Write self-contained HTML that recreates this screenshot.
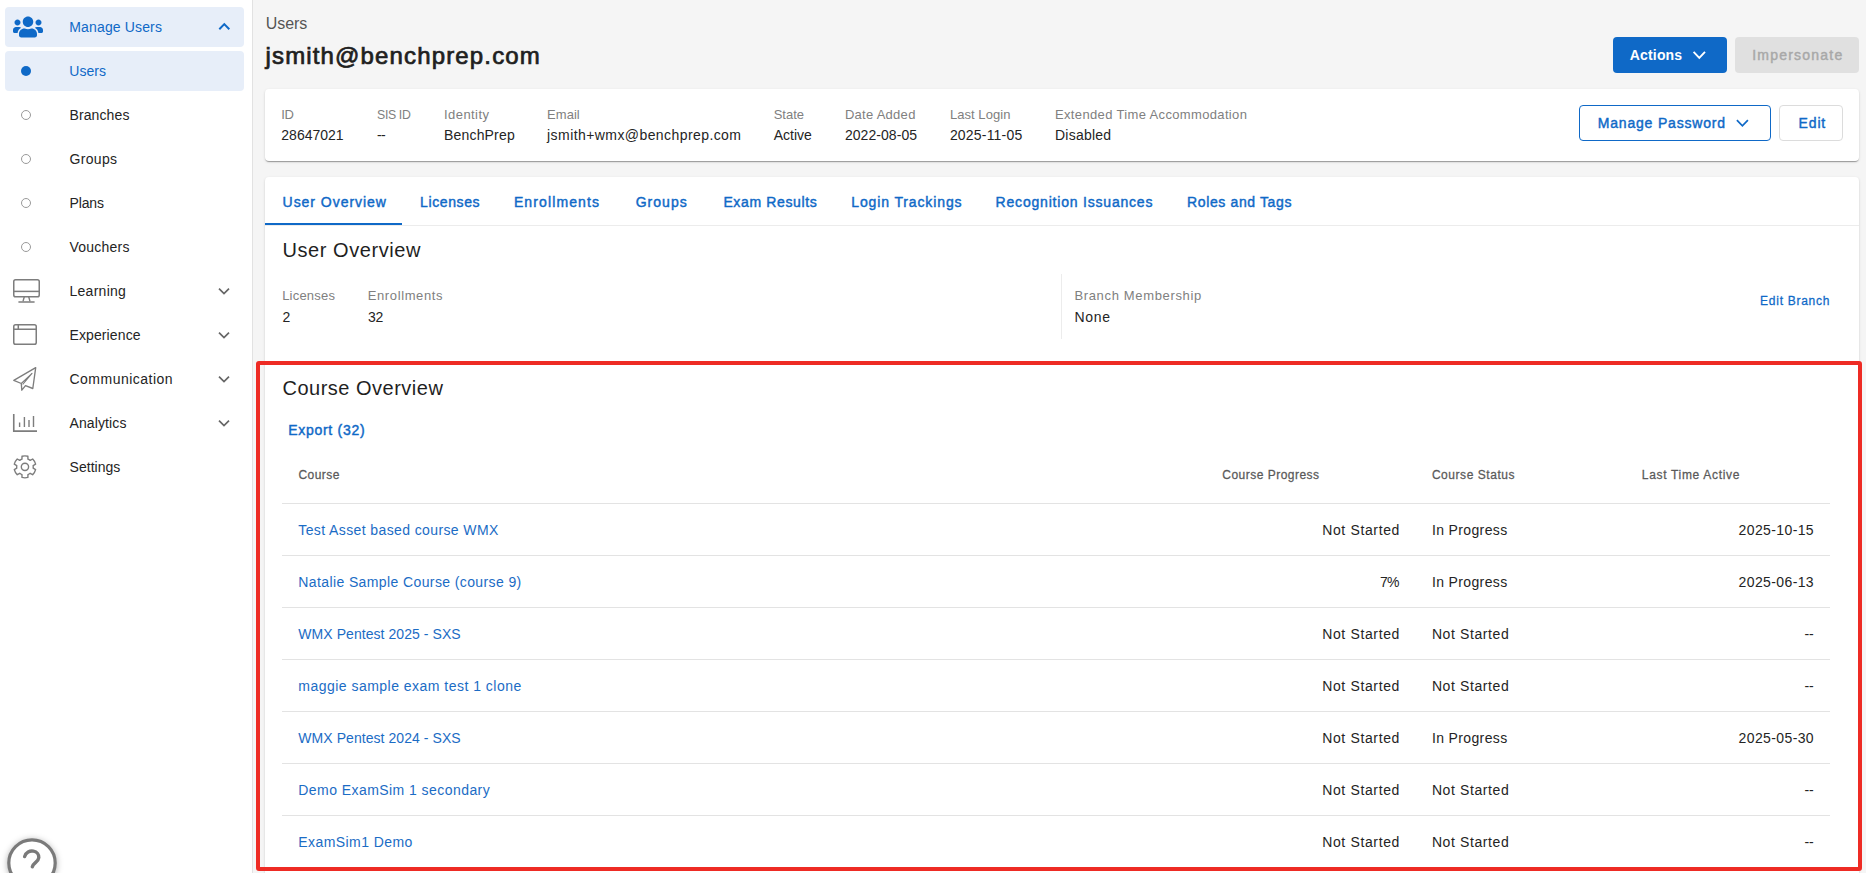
<!DOCTYPE html>
<html lang="en"><head><meta charset="utf-8"><title>Users - jsmith@benchprep.com</title>
<style>
*{box-sizing:border-box}
html,body{margin:0;padding:0}
body{width:1866px;height:873px;overflow:hidden;background:#f5f5f5;font-family:"Liberation Sans", sans-serif;position:relative;color:#242424}
.t{position:absolute;white-space:pre;line-height:1;text-decoration:none;margin:0;padding:0;font-style:normal}
.box{position:absolute}
svg{position:absolute;overflow:visible}
.sidebar-bg{left:0;top:0;width:252px;height:873px;background:#fff;border-right:1px solid #e2e2e2;width:253px}
.hl{left:5px;width:239px;height:40px;border-radius:4px;background:#e7eef9}
.dot{width:10px;height:10px;border-radius:50%;left:21px}
.dot.on{background:#0f69c7}
.dot.off{border:1px solid #9a9a9a;background:#fff}
.card{background:#fff;border-radius:4px}
.btn{border-radius:4px}
.line{background:#e3e3e3;height:1px}

table,thead,tbody,tr,th,td,dl,dt,dd,h1,h2{display:block;margin:0;padding:0;border:0;font-weight:400}
</style></head>
<body>
<aside>
<div class="box sidebar-bg"></div>
<nav>
<div class="box hl" style="top:7px"></div>
<div class="box hl" style="top:51px"></div>
<a>
<svg style="left:13.2px;top:14.7px" width="30" height="24" viewBox="0 0 640 512"><path fill="#0f69c7" d="M96 224c35.3 0 64-28.700 64-64s-28.700-64-64-64-64 28.700-64 64 28.700 64 64 64zm448 0c35.300 0 64-28.700 64-64s-28.700-64-64-64-64 28.700-64 64 28.700 64 64 64zm32 32h-64c-17.600 0-33.500 7.100-45.100 18.600 40.300 22.100 68.900 62 75.100 109.400h66c17.700 0 32-14.300 32-32v-32c0-35.300-28.700-64-64-64zm-256 0c61.900 0 112-50.100 112-112S381.900 32 320 32 208 82.100 208 144s50.100 112 112 112zm76.800 32h-8.300c-20.800 10-43.900 16-68.500 16s-47.600-6-68.500-16h-8.300C179.600 288 128 339.600 128 403.200V432c0 26.500 21.500 48 48 48h288c26.500 0 48-21.500 48-48v-28.800c0-63.600-51.600-115.200-115.200-115.200zm-223.700-13.400C161.500 263.100 145.600 256 128 256H64c-35.300 0-64 28.700-64 64v32c0 17.700 14.300 32 32 32h65.900c6.300-47.400 34.900-87.300 75.200-109.400z"/></svg>
<span class="t" style="top:20.15px;font-size:14px;font-weight:400;color:#0f69c7;letter-spacing:0.14px;left:69.3px;">Manage Users</span>
<svg style="left:217px;top:21px" width="14" height="12" viewBox="0 0 14 12"><path d="M2.3 8.2 L7.3 3.1 L12.3 8.2" fill="none" stroke="#0f69c7" stroke-width="2"/></svg>
</a>
<a><div class="box dot on" style="top:66px"></div><span class="t" style="top:64.15px;font-size:14px;font-weight:400;color:#0f69c7;letter-spacing:0.01px;left:69.3px;">Users</span></a>
<a><div class="box dot off" style="top:110px"></div><span class="t" style="top:108.15px;font-size:14px;font-weight:400;color:#242424;letter-spacing:0.11px;left:69.5px;">Branches</span></a>
<a><div class="box dot off" style="top:154px"></div><span class="t" style="top:152.15px;font-size:14px;font-weight:400;color:#242424;letter-spacing:0.32px;left:69.5px;">Groups</span></a>
<a><div class="box dot off" style="top:198px"></div><span class="t" style="top:196.15px;font-size:14px;font-weight:400;color:#242424;letter-spacing:-0.16px;left:69.5px;">Plans</span></a>
<a><div class="box dot off" style="top:242px"></div><span class="t" style="top:240.15px;font-size:14px;font-weight:400;color:#242424;letter-spacing:0.22px;left:69.5px;">Vouchers</span></a>
<a><svg style="left:13px;top:279px" width="27" height="24" viewBox="0 0 27 24" fill="none" stroke="#7d7d7d" stroke-width="1.5"><rect x="0.75" y="0.75" width="25.5" height="17" rx="1.8"/><path d="M0.75 12.4H26.25"/><path d="M11.3 17.8 L10 22.4 M15.7 17.8 L17 22.4" stroke-width="1.4"/><path d="M6 23H21" stroke-width="1.6" stroke-linecap="round"/></svg><span class="t" style="top:284.15px;font-size:14px;font-weight:400;color:#242424;letter-spacing:0.27px;left:69.5px;">Learning</span><svg style="left:217px;top:285px" width="14" height="12" viewBox="0 0 14 12"><path d="M2 3.6 L7 8.6 L12 3.6" fill="none" stroke="#666" stroke-width="1.7"/></svg></a>
<a><svg style="left:13px;top:324px" width="24" height="21" viewBox="0 0 24 21" fill="none" stroke="#7d7d7d" stroke-width="1.5"><rect x="0.75" y="0.75" width="22.5" height="19.5" rx="1.8"/><path d="M0.75 5.2H23.25 M5.3 0.75V5.2"/></svg><span class="t" style="top:328.15px;font-size:14px;font-weight:400;color:#242424;letter-spacing:0.11px;left:69.5px;">Experience</span><svg style="left:217px;top:329px" width="14" height="12" viewBox="0 0 14 12"><path d="M2 3.6 L7 8.6 L12 3.6" fill="none" stroke="#666" stroke-width="1.7"/></svg></a>
<a><svg style="left:0;top:0" width="60" height="400" viewBox="0 0 60 400" fill="none" stroke="#7d7d7d" stroke-width="1.35" stroke-linejoin="round"><path d="M35.7 367.7 L13.8 380.4 L21.3 383.5 L21.8 390.2 L25.5 385.6 L32.8 388.5 Z"/><path d="M21.3 383.5 L32 373.300 L22.700 384.500" stroke-width="1.1"/></svg><span class="t" style="top:372.15px;font-size:14px;font-weight:400;color:#242424;letter-spacing:0.48px;left:69.5px;">Communication</span><svg style="left:217px;top:373px" width="14" height="12" viewBox="0 0 14 12"><path d="M2 3.6 L7 8.6 L12 3.6" fill="none" stroke="#666" stroke-width="1.7"/></svg></a>
<a><svg style="left:13px;top:414px" width="24" height="18" viewBox="0 0 24 18" fill="none" stroke="#7d7d7d" stroke-width="1.5"><path d="M0.75 0V17.1H24" stroke-width="1.6"/><path d="M6.6 8.6V13 M11.4 3V13 M16 6V13 M20.5 1.9V13" stroke-width="1.4"/></svg><span class="t" style="top:416.15px;font-size:14px;font-weight:400;color:#242424;letter-spacing:0.11px;left:69.5px;">Analytics</span><svg style="left:217px;top:417px" width="14" height="12" viewBox="0 0 14 12"><path d="M2 3.6 L7 8.6 L12 3.6" fill="none" stroke="#666" stroke-width="1.7"/></svg></a>
<a><svg style="left:0;top:0" width="60" height="500" viewBox="0 0 60 500" fill="none" stroke="#7d7d7d" stroke-width="1.4" stroke-linejoin="round"><path d="M21.95 459.11 L22.02 456.25 A11.00 11.00 0 0 1 27.88 456.25 L27.95 459.11 A8.30 8.30 0 0 1 30.15 460.38 L32.66 459.01 A11.00 11.00 0 0 1 35.60 464.09 L33.15 465.58 A8.30 8.30 0 0 1 33.15 468.12 L35.60 469.61 A11.00 11.00 0 0 1 32.66 474.69 L30.15 473.32 A8.30 8.30 0 0 1 27.95 474.59 L27.88 477.45 A11.00 11.00 0 0 1 22.02 477.45 L21.95 474.59 A8.30 8.30 0 0 1 19.75 473.32 L17.24 474.69 A11.00 11.00 0 0 1 14.30 469.61 L16.75 468.12 A8.30 8.30 0 0 1 16.75 465.58 L14.30 464.09 A11.00 11.00 0 0 1 17.24 459.01 L19.75 460.38 A8.30 8.30 0 0 1 21.95 459.11Z"/><circle cx="24.95" cy="466.85" r="3.65"/></svg><span class="t" style="top:460.15px;font-size:14px;font-weight:400;color:#242424;letter-spacing:0.04px;left:69.5px;">Settings</span></a>
</nav>
<svg style="left:4px;top:835px" width="56" height="56" viewBox="0 0 56 56"><circle cx="28" cy="28" r="23.2" fill="#fff" stroke="#7a7a7a" stroke-width="3.2" style="filter:drop-shadow(0 1px 3px rgba(0,0,0,.3))"/><path d="M20.6 21.6c1.200-4.300 5.200-6.200 8.800-5.500 3.600 0.700 5.600 3.600 5.400 6.500-0.300 4.400-5.800 5.400-6.500 9.300" fill="none" stroke="#7a7a7a" stroke-width="3.4" stroke-linecap="round"/></svg>
</aside>
<main>
<header>
<span class="t" style="top:15.86px;font-size:16px;font-weight:400;color:#555;letter-spacing:-0.1px;left:265.8px;">Users</span>
<h1 class="t" style="top:43.58px;font-size:24px;font-weight:400;-webkit-text-stroke:0.74px #1f1f1f;color:#1f1f1f;letter-spacing:1.15px;left:265.5px;">jsmith@benchprep.com</h1>
<div class="box btn" style="left:1613px;top:37px;width:114px;height:36px;background:#0f69c7"></div>
<span class="t" style="top:48.35px;font-size:14px;font-weight:700;color:#fff;letter-spacing:0.16px;left:1629.8px;">Actions</span>
<svg style="left:1692px;top:49px" width="15" height="12" viewBox="0 0 15 12"><path d="M1.6 2.900 L7.300 8.800 L13 2.900" fill="none" stroke="#fff" stroke-width="1.900"/></svg>
<div class="box btn" style="left:1735px;top:37px;width:124px;height:36px;background:#e0e0e0"></div>
<span class="t" style="top:48.35px;font-size:14px;font-weight:400;-webkit-text-stroke:0.43px #a8a8a8;color:#a8a8a8;letter-spacing:1.22px;left:1752.2px;">Impersonate</span>
</header>
<section>
<div class="box card" style="left:265px;top:89px;width:1594px;height:71.500px;box-shadow:0 2px 1px -1px rgba(0,0,0,.2),0 1px 1px 0 rgba(0,0,0,.14),0 1px 3px 0 rgba(0,0,0,.12)"></div>
<dl>
<dt class="t" style="top:108.0px;font-size:13px;font-weight:400;color:#808080;letter-spacing:-0.4px;left:281.3px;">ID</dt><dd class="t" style="top:128.15px;font-size:14px;font-weight:400;color:#242424;letter-spacing:0.01px;left:281.3px;">28647021</dd>
<dt class="t" style="top:108.59px;font-size:12.3px;font-weight:400;color:#808080;letter-spacing:-0.37px;left:377.1px;">SIS ID</dt><dd class="t" style="top:128.15px;font-size:14px;font-weight:400;color:#242424;letter-spacing:-0.73px;left:377.1px;">--</dd>
<dt class="t" style="top:108.0px;font-size:13px;font-weight:400;color:#808080;letter-spacing:0.44px;left:444px;">Identity</dt><dd class="t" style="top:128.15px;font-size:14px;font-weight:400;color:#242424;letter-spacing:0.18px;left:444px;">BenchPrep</dd>
<dt class="t" style="top:108.0px;font-size:13px;font-weight:400;color:#808080;letter-spacing:0.02px;left:547.1px;">Email</dt><dd class="t" style="top:128.15px;font-size:14px;font-weight:400;color:#242424;letter-spacing:0.42px;left:547.1px;">jsmith+wmx@benchprep.com</dd>
<dt class="t" style="top:108.0px;font-size:13px;font-weight:400;color:#808080;letter-spacing:-0.01px;left:773.7px;">State</dt><dd class="t" style="top:128.15px;font-size:14px;font-weight:400;color:#242424;letter-spacing:0.01px;left:773.7px;">Active</dd>
<dt class="t" style="top:108.0px;font-size:13px;font-weight:400;color:#808080;letter-spacing:0.28px;left:844.9px;">Date Added</dt><dd class="t" style="top:128.15px;font-size:14px;font-weight:400;color:#242424;letter-spacing:0.06px;left:844.9px;">2022-08-05</dd>
<dt class="t" style="top:108.0px;font-size:13px;font-weight:400;color:#808080;letter-spacing:0.06px;left:949.9px;">Last Login</dt><dd class="t" style="top:128.15px;font-size:14px;font-weight:400;color:#242424;letter-spacing:0.19px;left:949.9px;">2025-11-05</dd>
<dt class="t" style="top:108.0px;font-size:13px;font-weight:400;color:#808080;letter-spacing:0.35px;left:1055px;">Extended Time Accommodation</dt><dd class="t" style="top:128.15px;font-size:14px;font-weight:400;color:#242424;letter-spacing:0.23px;left:1055px;">Disabled</dd>
</dl>
<div class="box btn" style="left:1579px;top:105px;width:192px;height:36px;border:1px solid #0f69c7;background:#fff"></div>
<span class="t" style="top:116.35px;font-size:14px;font-weight:400;-webkit-text-stroke:0.43px #0f69c7;color:#0f69c7;letter-spacing:0.82px;left:1597.7px;">Manage Password</span>
<svg style="left:1735px;top:117px" width="15" height="12" viewBox="0 0 15 12"><path d="M1.9 3.100 L7.400 8.800 L12.9 3.100" fill="none" stroke="#0f69c7" stroke-width="1.700"/></svg>
<div class="box btn" style="left:1779px;top:105px;width:64px;height:36px;border:1px solid #dcdcdc;background:#fff"></div>
<span class="t" style="top:116.35px;font-size:14px;font-weight:400;-webkit-text-stroke:0.43px #0f69c7;color:#0f69c7;letter-spacing:0.83px;left:1798.6px;">Edit</span>
</section>
<section>
<div class="box card" style="left:265px;top:177px;width:1594px;height:720px;border-radius:4px 4px 0 0;box-shadow:0 2px 1px -1px rgba(0,0,0,.2),0 1px 1px 0 rgba(0,0,0,.14),0 1px 3px 0 rgba(0,0,0,.12)"></div>
<div class="box line" style="left:265px;top:225px;width:1594px;background:#ececec"></div>
<div class="box" style="left:265px;top:223px;width:137px;height:2px;background:#0f69c7"></div>
<nav>
<a class="t" style="top:195.15px;font-size:14px;font-weight:400;-webkit-text-stroke:0.43px #0f69c7;color:#0f69c7;letter-spacing:0.96px;left:282.6px;">User Overview</a>
<a class="t" style="top:195.15px;font-size:14px;font-weight:400;-webkit-text-stroke:0.43px #0f69c7;color:#0f69c7;letter-spacing:0.62px;left:420px;">Licenses</a>
<a class="t" style="top:195.15px;font-size:14px;font-weight:400;-webkit-text-stroke:0.43px #0f69c7;color:#0f69c7;letter-spacing:1.12px;left:513.9px;">Enrollments</a>
<a class="t" style="top:195.15px;font-size:14px;font-weight:400;-webkit-text-stroke:0.43px #0f69c7;color:#0f69c7;letter-spacing:1.02px;left:635.7px;">Groups</a>
<a class="t" style="top:195.15px;font-size:14px;font-weight:400;-webkit-text-stroke:0.43px #0f69c7;color:#0f69c7;letter-spacing:0.64px;left:723.4px;">Exam Results</a>
<a class="t" style="top:195.15px;font-size:14px;font-weight:400;-webkit-text-stroke:0.43px #0f69c7;color:#0f69c7;letter-spacing:0.87px;left:851.3px;">Login Trackings</a>
<a class="t" style="top:195.15px;font-size:14px;font-weight:400;-webkit-text-stroke:0.43px #0f69c7;color:#0f69c7;letter-spacing:0.8px;left:995.6px;">Recognition Issuances</a>
<a class="t" style="top:195.15px;font-size:14px;font-weight:400;-webkit-text-stroke:0.43px #0f69c7;color:#0f69c7;letter-spacing:0.63px;left:1187px;">Roles and Tags</a>
</nav>
<h2 class="t" style="top:240.07px;font-size:20px;font-weight:400;color:#1f1f1f;letter-spacing:0.57px;left:282.4px;">User Overview</h2>
<span class="t" style="top:289.0px;font-size:13px;font-weight:400;color:#808080;letter-spacing:0.2px;left:282.2px;">Licenses</span><span class="t" style="top:310.15px;font-size:14px;font-weight:400;color:#242424;letter-spacing:-0.7px;left:282.6px;">2</span>
<span class="t" style="top:289.0px;font-size:13px;font-weight:400;color:#808080;letter-spacing:0.62px;left:367.7px;">Enrollments</span><span class="t" style="top:310.15px;font-size:14px;font-weight:400;color:#242424;letter-spacing:-0.18px;left:367.9px;">32</span>
<div class="box" style="left:1061px;top:274px;width:1px;height:65px;background:#ececec"></div>
<span class="t" style="top:289.0px;font-size:13px;font-weight:400;color:#808080;letter-spacing:0.66px;left:1074.4px;">Branch Membership</span><span class="t" style="top:310.15px;font-size:14px;font-weight:400;color:#242424;letter-spacing:0.64px;left:1074.6px;">None</span>
<a class="t" style="top:294.84px;font-size:12px;font-weight:400;-webkit-text-stroke:0.26px #0f69c7;color:#0f69c7;letter-spacing:0.73px;left:1760.1px;">Edit Branch</a>
<h2 class="t" style="top:378.37px;font-size:20px;font-weight:400;color:#1f1f1f;letter-spacing:0.5px;left:282.5px;">Course Overview</h2>
<a class="t" style="top:423.15px;font-size:14px;font-weight:400;-webkit-text-stroke:0.43px #0f69c7;color:#0f69c7;letter-spacing:0.72px;left:288.2px;">Export (32)</a>
<table><thead><tr>
<th><span class="t" style="top:468.84px;font-size:12px;font-weight:400;-webkit-text-stroke:0.26px #5a5a5a;color:#5a5a5a;letter-spacing:0.46px;left:298.4px;">Course</span></th>
<th><span class="t" style="top:468.84px;font-size:12px;font-weight:400;-webkit-text-stroke:0.26px #5a5a5a;color:#5a5a5a;letter-spacing:0.48px;left:1222.3px;">Course Progress</span></th>
<th><span class="t" style="top:468.84px;font-size:12px;font-weight:400;-webkit-text-stroke:0.26px #5a5a5a;color:#5a5a5a;letter-spacing:0.55px;left:1431.9px;">Course Status</span></th>
<th><span class="t" style="top:468.84px;font-size:12px;font-weight:400;-webkit-text-stroke:0.26px #5a5a5a;color:#5a5a5a;letter-spacing:0.68px;left:1641.8px;">Last Time Active</span></th>
</tr></thead><tbody>
<tr>
<td><div class="box line" style="left:282px;top:503px;width:1548px"></div><a class="t" style="top:523.15px;font-size:14px;font-weight:400;color:#1b6cc5;letter-spacing:0.39px;left:298.3px;">Test Asset based course WMX</a></td>
<td><span class="t" style="top:523.15px;font-size:14px;font-weight:400;color:#242424;letter-spacing:0.64px;left:1322.2px;">Not Started</span></td>
<td><span class="t" style="top:523.15px;font-size:14px;font-weight:400;color:#242424;letter-spacing:0.37px;left:1431.9px;">In Progress</span></td>
<td><span class="t" style="top:523.15px;font-size:14px;font-weight:400;color:#242424;letter-spacing:0.38px;left:1738.6px;">2025-10-15</span></td>
</tr>
<tr>
<td><div class="box line" style="left:282px;top:555px;width:1548px"></div><a class="t" style="top:575.15px;font-size:14px;font-weight:400;color:#1b6cc5;letter-spacing:0.39px;left:298.3px;">Natalie Sample Course (course 9)</a></td>
<td><span class="t" style="top:575.15px;font-size:14px;font-weight:400;color:#242424;letter-spacing:-0.83px;left:1380px;">7%</span></td>
<td><span class="t" style="top:575.15px;font-size:14px;font-weight:400;color:#242424;letter-spacing:0.37px;left:1431.9px;">In Progress</span></td>
<td><span class="t" style="top:575.15px;font-size:14px;font-weight:400;color:#242424;letter-spacing:0.38px;left:1738.6px;">2025-06-13</span></td>
</tr>
<tr>
<td><div class="box line" style="left:282px;top:607px;width:1548px"></div><a class="t" style="top:627.15px;font-size:14px;font-weight:400;color:#1b6cc5;letter-spacing:0.06px;left:298.3px;">WMX Pentest 2025 - SXS</a></td>
<td><span class="t" style="top:627.15px;font-size:14px;font-weight:400;color:#242424;letter-spacing:0.64px;left:1322.2px;">Not Started</span></td>
<td><span class="t" style="top:627.15px;font-size:14px;font-weight:400;color:#242424;letter-spacing:0.6px;left:1431.9px;">Not Started</span></td>
<td><span class="t" style="top:627.15px;font-size:14px;font-weight:400;color:#242424;letter-spacing:-0.23px;left:1804.5px;">--</span></td>
</tr>
<tr>
<td><div class="box line" style="left:282px;top:659px;width:1548px"></div><a class="t" style="top:679.15px;font-size:14px;font-weight:400;color:#1b6cc5;letter-spacing:0.48px;left:298.3px;">maggie sample exam test 1 clone</a></td>
<td><span class="t" style="top:679.15px;font-size:14px;font-weight:400;color:#242424;letter-spacing:0.64px;left:1322.2px;">Not Started</span></td>
<td><span class="t" style="top:679.15px;font-size:14px;font-weight:400;color:#242424;letter-spacing:0.6px;left:1431.9px;">Not Started</span></td>
<td><span class="t" style="top:679.15px;font-size:14px;font-weight:400;color:#242424;letter-spacing:-0.23px;left:1804.5px;">--</span></td>
</tr>
<tr>
<td><div class="box line" style="left:282px;top:711px;width:1548px"></div><a class="t" style="top:731.15px;font-size:14px;font-weight:400;color:#1b6cc5;letter-spacing:0.06px;left:298.3px;">WMX Pentest 2024 - SXS</a></td>
<td><span class="t" style="top:731.15px;font-size:14px;font-weight:400;color:#242424;letter-spacing:0.64px;left:1322.2px;">Not Started</span></td>
<td><span class="t" style="top:731.15px;font-size:14px;font-weight:400;color:#242424;letter-spacing:0.37px;left:1431.9px;">In Progress</span></td>
<td><span class="t" style="top:731.15px;font-size:14px;font-weight:400;color:#242424;letter-spacing:0.38px;left:1738.6px;">2025-05-30</span></td>
</tr>
<tr>
<td><div class="box line" style="left:282px;top:763px;width:1548px"></div><a class="t" style="top:783.15px;font-size:14px;font-weight:400;color:#1b6cc5;letter-spacing:0.44px;left:298.3px;">Demo ExamSim 1 secondary</a></td>
<td><span class="t" style="top:783.15px;font-size:14px;font-weight:400;color:#242424;letter-spacing:0.64px;left:1322.2px;">Not Started</span></td>
<td><span class="t" style="top:783.15px;font-size:14px;font-weight:400;color:#242424;letter-spacing:0.6px;left:1431.9px;">Not Started</span></td>
<td><span class="t" style="top:783.15px;font-size:14px;font-weight:400;color:#242424;letter-spacing:-0.23px;left:1804.5px;">--</span></td>
</tr>
<tr>
<td><div class="box line" style="left:282px;top:815px;width:1548px"></div><a class="t" style="top:835.15px;font-size:14px;font-weight:400;color:#1b6cc5;letter-spacing:0.43px;left:298.3px;">ExamSim1 Demo</a></td>
<td><span class="t" style="top:835.15px;font-size:14px;font-weight:400;color:#242424;letter-spacing:0.64px;left:1322.2px;">Not Started</span></td>
<td><span class="t" style="top:835.15px;font-size:14px;font-weight:400;color:#242424;letter-spacing:0.6px;left:1431.9px;">Not Started</span></td>
<td><span class="t" style="top:835.15px;font-size:14px;font-weight:400;color:#242424;letter-spacing:-0.23px;left:1804.5px;">--</span></td>
</tr>
</tbody></table>
<div class="box" style="left:256px;top:361px;width:1606px;height:510px;border:4px solid #ee2b24;border-radius:3px"></div>
</section>
</main>
</body></html>
